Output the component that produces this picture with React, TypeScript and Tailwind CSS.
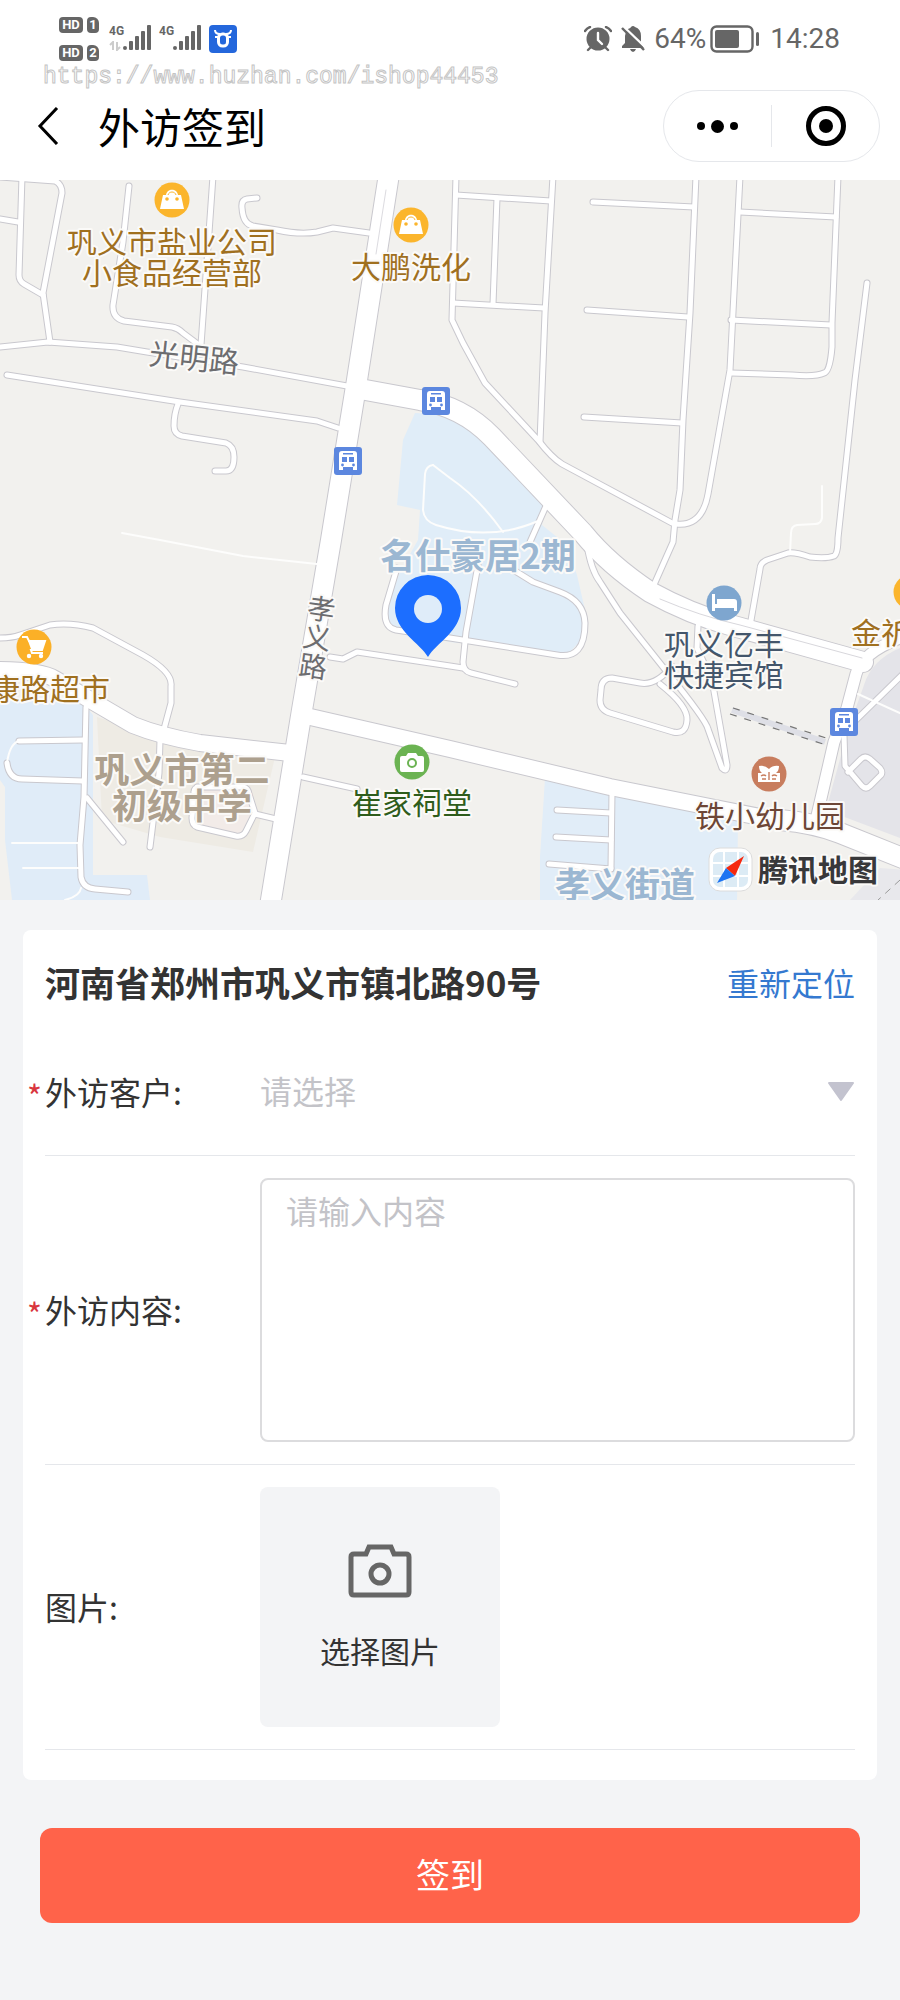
import { useState } from 'react'
import type { ReactNode } from 'react'

type RoadSize = 'lane' | 'street' | 'avenue' | 'main'

interface Road {
  d: string
  size: RoadSize
}

interface MapLabelProps {
  x: number
  y: number
  lines: string[]
  color: string
  size?: number
  weight?: number
  anchor?: 'start' | 'middle' | 'end'
}

interface FieldRowProps {
  id: string
  label: string
  required?: boolean
  className?: string
  children: ReactNode
}

const ROAD_WIDTH: Record<RoadSize, number> = {
  lane: 5,
  street: 11,
  avenue: 16,
  main: 20,
}

const ROADS: Road[] = [
  // north west blocks
  { size: 'lane', d: 'M0 167 L48 162 L117 167 L147 172 L243 187 L347 206' },
  { size: 'lane', d: 'M7 195 L180 222 L317 241 L338 248' },
  { size: 'lane', d: 'M178 224 Q174 234 174 246 Q174 254 182 256 L226 263 Q234 266 234 277 Q234 291 226 291 L215 291' },
  { size: 'lane', d: 'M22 -4 L19 95 Q19 101 24 104 L43 115' },
  { size: 'lane', d: 'M0 39 L18 42' },
  { size: 'lane', d: 'M0 -3 L55 1 Q62 4 62 13 L43 113 L50 162' },
  { size: 'lane', d: 'M129 6 L123 62 L113 125 Q112 138 124 141 L172 147 Q178 148 183 153 L199 165' },
  { size: 'lane', d: 'M213 -4 L208 67 L201 165' },
  { size: 'lane', d: 'M257 18 L247 19 Q241 20 242 28 Q243 44 253 46 L277 50 Q300 55 317 52 L333 48 L369 53' },
  // north east grid
  { size: 'lane', d: 'M456 -4 L452 140 L463 163 L485 203 L538 260 Q552 278 562 284 L672 343' },
  { size: 'lane', d: 'M456 15 L551 21' },
  { size: 'lane', d: 'M497 18 L493 124' },
  { size: 'lane', d: 'M453 123 L544 128' },
  { size: 'lane', d: 'M553 -4 L545 133 L540 262' },
  { size: 'lane', d: 'M593 22 L694 27' },
  { size: 'lane', d: 'M587 130 L688 137' },
  { size: 'lane', d: 'M584 237 L682 243' },
  { size: 'lane', d: 'M696 -4 L690 133 L683 240 L680 310 L675 340 L673 362 L653 407' },
  { size: 'lane', d: 'M740 -4 L730 190 L708 314 Q702 347 676 344' },
  { size: 'lane', d: 'M838 -4 L832 143 L832 167 Q830 192 824 193 Q816 197 792 195 L731 193' },
  { size: 'lane', d: 'M740 32 L836 37' },
  { size: 'lane', d: 'M731 140 L831 145' },
  { size: 'lane', d: 'M867 103 L855 200 L838 358 Q838 374 834 376 Q826 379 810 377 Q795 372 788 373 L767 380 Q760 383 760 389 L750 446' },
  // housing estate
  { size: 'lane', d: 'M546 326 L530 362' },
  { size: 'lane', d: 'M478 385 L466 452 L463 482 Q463 491 471 493 L515 504' },
  { size: 'lane', d: 'M397 388 L386 425 Q382 447 396 450 L450 458 L557 475 Q585 480 585 443 Q584 421 560 412 L533 402 L507 386' },
  { size: 'lane', d: 'M330 477 L343 479 L357 472 L450 486 L463 488' },
  // diagonal lanes in the middle
  { size: 'lane', d: 'M587 365 Q591 390 600 402 L620 433 L667 492 Q706 540 708 549 L722 588 Q727 593 727 585 L712 500 L697 468 L698 446' },
  { size: 'lane', d: 'M672 486 Q656 506 640 503 L612 498 Q601 498 601 510 L600 520 Q600 530 610 533 L673 552 Q686 555 687 540 Q688 526 660 504' },
  // south west
  { size: 'lane', d: 'M0 458 Q12 458 20 455 L50 445 Q70 442 93 448 L143 475 Q173 492 171 506 L171 523 L164 549 L160 560 L159 593 L150 667' },
  { size: 'lane', d: 'M86 527 L84 617 L80 665 L81 697 Q83 708 95 709 L128 712' },
  { size: 'lane', d: 'M87 618 L123 662' },
  { size: 'lane', d: 'M83 560 L19 561' },
  { size: 'lane', d: 'M7 583 Q9 599 22 599 L83 601' },
  { size: 'lane', d: 'M197 607 L243 607 Q248 608 249 614 L255 633 L246 651 Q243 657 236 656 L197 647 Q192 645 192 638 L194 612 Q194 608 199 607' },
  { size: 'lane', d: 'M255 634 L276 639' },
  { size: 'lane', d: 'M303 597 L357 609' },
  // south east
  { size: 'lane', d: 'M612 612 L611 688' },
  { size: 'lane', d: 'M557 630 L611 633' },
  { size: 'lane', d: 'M556 657 L611 660' },
  { size: 'lane', d: 'M549 684 L611 689' },
  { size: 'lane', d: 'M902 495 L856 540' },
  { size: 'lane', d: 'M844 555 L845 586 L862 606 Q866 610 870 606 L881 595 Q883 592 880 588 L870 579 Q865 575 861 579 L848 592' },
  { size: 'street', d: 'M905 456 Q862 472 856 494 L847 528 L834 562 L816 640' },
  { size: 'avenue', d: 'M-4 490 Q40 490 55 499 L92 521 L133 545 Q160 556 200 563 L290 573' },
  { size: 'avenue', d: 'M306 536 L450 569 L610 607 L710 627 L790 643' },
  { size: 'main', d: 'M780 640 Q815 643 840 653 L905 679' },
  { size: 'main', d: 'M360 209 L420 220 Q462 226 492 257 L583 353 Q608 384 650 412 Q690 434 730 445 L863 482' },
  { size: 'main', d: 'M389 -6 L357 200 L331 360 L302 530 L270 726' },
]

// footpaths have no outline
const PATHS = [
  'M122 353 L160 360 L243 376 L317 384',
  'M433 285 Q426 286 425 294 L423 330 Q424 341 436 345 Q490 362 538 341',
  'M433 285 L450 298 Q478 317 503 352',
  'M822 306 L822 338 Q821 344 815 344 L797 345 Q791 346 791 353 L790 373',
  'M20 561 Q10 562 7 583',
  'M12 663 L79 663',
  'M23 688 L79 688',
  'M81 708 Q80 716 65 720',
  'M858 514 L902 534',
]

function MapRoads() {
  return (
    <g fill="none" strokeLinecap="round" strokeLinejoin="round">
      {ROADS.map((road) => (
        <path key={road.d} d={road.d} stroke="#c9c8ce" strokeWidth={ROAD_WIDTH[road.size] + 2} />
      ))}
      {PATHS.map((d) => (
        <path key={d} d={d} stroke="#fdfdfc" strokeWidth="2" />
      ))}
      {ROADS.map((road) => (
        <path key={road.d} d={road.d} stroke="#fff" strokeWidth={ROAD_WIDTH[road.size]} />
      ))}
      <path d="M660 419 Q700 436 740 445 L862 478" stroke="#d8d7dc" strokeWidth="1" />
      <path d="M386 10 L376 74" stroke="#dcdbe0" strokeWidth="1" />
    </g>
  )
}

function MapLabel({ x, y, lines, color, size = 30, weight = 400, anchor = 'middle' }: MapLabelProps) {
  return (
    <text
      textAnchor={anchor}
      fontSize={size}
      fontWeight={weight}
      fill={color}
      stroke="#fbfaf8"
      strokeWidth="4"
      strokeLinejoin="round"
      paintOrder="stroke"
    >
      {lines.map((line, index) => (
        <tspan key={line} x={x} y={y + index * (size + 1)}>
          {line}
        </tspan>
      ))}
    </text>
  )
}

function Poi({ x, y, color, children }: { x: number; y: number; color: string; children?: ReactNode }) {
  return (
    <g transform={`translate(${x} ${y})`}>
      <circle r="17.5" fill={color} />
      {children}
    </g>
  )
}

function ShopBag() {
  return (
    <>
      <path d="M-9 -5 H-6 C-5 -12 5 -12 6 -5 H9 L12 9 H-12 Z" fill="#fff" />
      <path d="M-4 -5 C-3 -9 3 -9 4 -5" fill="none" stroke="#fbb52c" strokeWidth="1" />
      <circle cx="-5" cy="-1" r="1.8" fill="#fbb52c" />
      <circle cx="5" cy="-1" r="1.8" fill="#fbb52c" />
    </>
  )
}

function BusStop({ x, y }: { x: number; y: number }) {
  return (
    <g transform={`translate(${x} ${y})`}>
      <rect x="-14" y="-14" width="28" height="28" rx="3" fill="#5c87df" />
      <path d="M-6 -10 H6 Q9 -10 9 -7 V9 H5 V6 H-5 V9 H-9 V-7 Q-9 -10 -6 -10 Z" fill="#fff" />
      <rect x="-5" y="-8" width="10" height="1.5" fill="#5c87df" />
      <rect x="-6" y="-4" width="5" height="5" fill="#5c87df" />
      <rect x="1" y="-4" width="5" height="5" fill="#5c87df" />
      <circle cx="-5.5" cy="4" r="1.4" fill="#5c87df" />
      <circle cx="5.5" cy="4" r="1.4" fill="#5c87df" />
    </g>
  )
}

function LocationMap() {
  return (
    <svg
      viewBox="0 0 900 720"
      preserveAspectRatio="xMidYMid slice"
      className="block h-[720px] w-full bg-[#f2f1ee]"
      role="img"
      aria-label="地图"
    >
      {/* land use */}
      <path
        d="M415 233 L450 235 L480 250 L517 288 L545 325 L542 345 L567 365 L577 395 L585 430 L583 458 L567 475 L450 462 L388 450 L385 430 L400 392 L418 360 L420 330 L397 325 L403 260 Z"
        fill="#e0edf8"
      />
      <path d="M0 520 L83 523 L93 535 L93 695 L147 695 L150 720 L12 720 L5 660 L5 607 L0 600 Z" fill="#e0ecf8" />
      <path d="M545 598 L612 610 L738 640 L737 720 L540 720 L540 677 Z" fill="#e1edf8" />
      <path d="M97 537 L160 557 L275 577 L253 672 L160 657 L102 640 Z" fill="#eeebe4" />
      <path d="M194 610 L247 608 L254 634 L240 655 L194 645 Z" fill="#f2ebe8" />
      <path d="M905 466 Q872 478 864 505 L848 550 L826 630 L905 660 Z" fill="#e4e4e9" />
      <path d="M905 690 L880 688 L850 720 L905 720 Z" fill="#e8e8ec" />

      <MapRoads />

      {/* railway */}
      <path d="M732 530 L825 562" stroke="#dedfe6" strokeWidth="6" />
      <path d="M733 528 L826 558" stroke="#777" strokeWidth="1.2" strokeDasharray="7 8" />
      <path d="M730 534 L823 564" stroke="#777" strokeWidth="1.2" strokeDasharray="7 8" />
      <path d="M900 700 L878 720" stroke="#999" strokeWidth="1" strokeDasharray="7 6" />

      <BusStop x={436} y={221} />
      <BusStop x={348} y={281} />
      <BusStop x={844} y={542} />

      <Poi x={172} y={20} color="#fbb52c">
        <ShopBag />
      </Poi>
      <Poi x={411} y={45} color="#fbb52c">
        <ShopBag />
      </Poi>
      <Poi x={911} y={412} color="#fbb52c" />
      <Poi x={34} y={467} color="#fbb027">
        <path d="M-12 -10 H-7 L-5 -6 H11 L8 3 H-3 L-2 6 H9" fill="none" stroke="#fff" strokeWidth="2" />
        <path d="M-6 -6 H11 L8 2 H-3 Z" fill="#fff" />
        <circle cx="-5" cy="9" r="2.2" fill="#fff" />
        <circle cx="7" cy="9" r="2.2" fill="#fff" />
      </Poi>
      <Poi x={412} y={582} color="#6bb352">
        <path d="M-10 -6 H-6 L-4 -9 H4 L6 -6 H10 Q12 -6 12 -4 V8 Q12 10 10 10 H-10 Q-12 10 -12 8 V-4 Q-12 -6 -10 -6 Z" fill="#fff" />
        <circle cy="1" r="4" fill="#fff" stroke="#6bb352" strokeWidth="2" />
      </Poi>
      <Poi x={724} y={423} color="#7ea6cf">
        <path d="M-12 -9 H-9 V1 H9 V-3 H-7 V-4 H10 Q13 -4 13 -1 V8 H10 V5 H-9 V8 H-12 Z M-7 -4 H10 V2 H-7 Z" fill="#fff" />
      </Poi>
      <Poi x={769} y={594} color="#c87d5e">
        <path d="M-10 -8 Q-4 -9 0 -5 Q4 -9 10 -8 Q10 -3 7 -1 H11 V8 H-11 V-1 H-7 Q-10 -3 -10 -8 Z" fill="#fff" />
        <path d="M-8 2 Q-5 0 -3 2 M3 2 Q5 0 8 2 M-7 5 H-3 M3 5 H7 M0 -2 V6" stroke="#c87d5e" strokeWidth="1.4" fill="none" />
      </Poi>

      <MapLabel x={172} y={73} lines={['巩义市盐业公司', '小食品经营部']} color="#a0701f" />
      <MapLabel x={411} y={98} lines={['大鹏洗化']} color="#a0701f" />
      <MapLabel x={110} y={520} lines={['康路超市']} color="#a0701f" anchor="end" />
      <MapLabel x={851} y={464} lines={['金祈']} color="#a0701f" anchor="start" />
      <MapLabel x={724} y={475} lines={['巩义亿丰', '快捷宾馆']} color="#44566b" />
      <MapLabel x={412} y={634} lines={['崔家祠堂']} color="#2f5d1c" />
      <MapLabel x={770} y={647} lines={['铁小幼儿园']} color="#6d4636" />
      <MapLabel x={182} y={603} lines={['巩义市第二', '初级中学']} color="#ada08e" size={35} weight={700} />
      <MapLabel x={478} y={389} lines={['名仕豪居2期']} color="#9bb7d2" size={35} weight={700} />
      <MapLabel x={625} y={718} lines={['孝义街道']} color="#9bb7d2" size={35} weight={700} />

      {/* road names follow the road */}
      <g transform="rotate(6 194 180)">
        <MapLabel x={194} y={189} lines={['光明路']} color="#6d6d70" />
      </g>
      <g transform="rotate(8 316 459)">
        <MapLabel x={317} y={439} lines={['孝', '义', '路']} color="#6d6d70" size={28} />
      </g>

      {/* current position */}
      <path d="M428 477 C420 463 395 451 395 428 A33 33 0 0 1 461 428 C461 451 436 463 428 477 Z" fill="#1c6eff" />
      <circle cx="428" cy="429" r="14" fill="#dfecf9" />

      {/* map provider */}
      <rect x="709" y="668" width="43" height="43" rx="11" fill="#fff" stroke="#dcdcdc" strokeWidth="1" />
      <rect x="713" y="672" width="35" height="35" rx="7" fill="#dcebf5" />
      <path d="M724 672 V707 M738 672 V707 M713 683 H748 M713 696 H748" stroke="#fff" strokeWidth="2" />
      <path d="M744 676 L726 688 L735 696 Z" fill="#f5290f" />
      <path d="M717 703 L726 688 L735 696 Z" fill="#1d74f2" />
      <MapLabel x={818} y={701} lines={['腾讯地图']} color="#38383a" size={30} weight={700} />
    </svg>
  )
}

function SimBadge({ slot }: { slot: string }) {
  return (
    <div className="flex gap-1 text-[13px] font-bold leading-4 text-white">
      <span className="w-6 rounded bg-[#666] text-center">HD</span>
      <span className="w-3 rounded-sm rounded-tr-md bg-[#666] text-center">{slot}</span>
    </div>
  )
}

function Signal({ data }: { data?: boolean }) {
  return (
    <div className="flex h-7">
      <div className="w-3.5 text-xs font-bold leading-3 text-[#666]">
        4G
        {data && (
          <svg viewBox="0 0 12 10" className="mt-1 h-2.5 w-3" fill="none" stroke="#ccc" strokeWidth="2" aria-hidden="true">
            <path d="M1 4 L4 1 V9 M8 1 V9 L11 6" />
          </svg>
        )}
      </div>
      <svg viewBox="0 0 28 26" className="h-[26px] w-7" fill="#666" aria-hidden="true">
        <rect x="0" y="21" width="4" height="4" rx="2" />
        <rect x="6" y="16" width="4" height="9" rx="1" />
        <rect x="12" y="11" width="4" height="14" rx="1" />
        <rect x="18" y="6" width="4" height="19" rx="1" />
        <rect x="24" y="0" width="4" height="25" rx="1" />
      </svg>
    </div>
  )
}

function StatusBar() {
  return (
    <div className="flex h-[76px] items-center justify-between pl-[59px] pr-[60px] pt-0.5 font-['Roboto',sans-serif]">
      <div className="flex items-center">
        <div className="mr-2.5 flex flex-col gap-3">
          <SimBadge slot="1" />
          <SimBadge slot="2" />
        </div>
        <div className="flex items-center gap-2">
          <Signal data />
          <Signal />
          <svg viewBox="0 0 28 28" className="size-7" aria-hidden="true">
            <rect width="28" height="28" rx="4" fill="#2467dc" />
            <rect x="9.5" y="9" width="9" height="12" rx="4" fill="none" stroke="#fff" strokeWidth="3" />
            <path d="M6 5 Q6 9 11 9 M22 5 Q22 9 17 9 M6 12 H9 M19 12 H22" fill="none" stroke="#fff" strokeWidth="2" />
          </svg>
        </div>
      </div>

      <div className="flex items-center text-[28px] leading-8 text-[#666]">
        <svg viewBox="0 0 28 26" className="mr-2 h-[26px] w-7" aria-hidden="true">
          <circle cx="14" cy="13" r="11.5" fill="#666" />
          <path d="M14 7 V14 L18 18" fill="none" stroke="#fff" strokeWidth="2.4" strokeLinecap="round" />
          <path d="M1 5 Q3 2 6 1 M27 5 Q25 2 22 1 M4 24 L6 22 M24 24 L22 22" fill="none" stroke="#666" strokeWidth="2.4" strokeLinecap="round" />
        </svg>
        <svg viewBox="0 0 26 26" className="mr-2 size-[26px]" aria-hidden="true">
          <path d="M8 3 Q11 2 11 1 Q13 -1 15 1 Q21 3 21 10 V17 L24 22 H2 V20 L5 17 V10 Q5 6 8 3 Z" fill="#666" />
          <path d="M10 23 H16 Q15 26 13 26 Q11 26 10 23 Z" fill="#666" />
          <path d="M4 1 L26 22" stroke="#fff" strokeWidth="2.4" />
          <path d="M2 2 L24 24" stroke="#666" strokeWidth="2.4" />
        </svg>
        <span className="mr-1">64%</span>
        <svg viewBox="0 0 50 28" className="mr-2.5 h-7 w-[50px]" aria-hidden="true">
          <rect x="1.5" y="1.5" width="41" height="25" rx="5" fill="none" stroke="#666" strokeWidth="2.4" />
          <rect x="5" y="5" width="24" height="18" rx="2" fill="#666" />
          <rect x="46" y="7" width="3" height="14" rx="1.5" fill="#666" />
        </svg>
        <span>14:28</span>
      </div>
    </div>
  )
}

function NavBar() {
  return (
    <div className="flex h-[104px] items-center pb-1 pl-9 pr-5">
      <button type="button" aria-label="返回" className="mr-[38px]">
        <svg viewBox="0 0 24 38" className="h-[38px] w-6" fill="none" stroke="#000" strokeWidth="3" aria-hidden="true">
          <path d="M21 1 L4 19 L21 37" />
        </svg>
      </button>
      <h1 className="text-[42px] leading-[60px] text-black">外访签到</h1>
      <div className="ml-auto flex h-[72px] w-[217px] items-center rounded-full border border-gray-200">
        <button type="button" aria-label="更多" className="flex w-[107px] items-center justify-center gap-1.5">
          <span className="size-2 rounded-full bg-black" />
          <span className="size-[13px] rounded-full bg-black" />
          <span className="size-2 rounded-full bg-black" />
        </button>
        <span className="h-[42px] w-px bg-gray-200" />
        <button type="button" aria-label="关闭" className="flex flex-1 justify-center">
          <span className="flex size-10 items-center justify-center rounded-full border-[5px] border-black">
            <span className="size-3.5 rounded-full bg-black" />
          </span>
        </button>
      </div>
    </div>
  )
}

function FieldRow({ id, label, required, className, children }: FieldRowProps) {
  return (
    <div className={`flex items-center border-b border-gray-200 ${className ?? ''}`}>
      <label htmlFor={id} className="relative w-[215px] shrink-0 pb-0.5 text-[32px] leading-10 text-[#333]">
        {required && <span className="absolute -left-[18px] top-1 text-[#d9363e]">*</span>}
        {label}:
      </label>
      {children}
    </div>
  )
}

export default function App() {
  const [customer, setCustomer] = useState('')
  const [content, setContent] = useState('')

  return (
    <div className="min-h-screen bg-[#f3f4f6] font-['Noto_Sans_CJK_SC',sans-serif]">
      <header className="relative bg-white">
        <StatusBar />
        <p className="absolute left-[43px] top-[63px] font-['Liberation_Mono',monospace] text-[23px] leading-7 text-white [-webkit-text-stroke:1px_#c4c4c4]">
          https://www.huzhan.com/ishop44453
        </p>
        <NavBar />
      </header>

      <LocationMap />

      <form onSubmit={(e) => e.preventDefault()}>
        <div className="mx-[23px] mt-[30px] rounded-lg bg-white px-[22px] pb-[30px]">
          <div className="flex h-[100px] items-center justify-between pt-1">
            <h2 className="text-[35px] font-bold leading-10 text-[#333]">河南省郑州市巩义市镇北路90号</h2>
            <button type="button" className="text-[32px] leading-10 text-[#3579d0]">
              重新定位
            </button>
          </div>

          <FieldRow id="customer" label="外访客户" required className="h-[126px] pb-0.5">
            <div className="relative flex-1">
              <select
                id="customer"
                value={customer}
                onChange={(e) => setCustomer(e.target.value)}
                className="block h-12 w-full appearance-none bg-transparent pb-1 text-[32px] leading-10 text-[#c3c3c8] outline-none"
              >
                <option value="">请选择</option>
              </select>
              <svg viewBox="0 0 28 20" className="pointer-events-none absolute right-0 top-3.5 h-5 w-7" aria-hidden="true">
                <path d="M2 1 H26 L14 18 Z" fill="#c3c3cf" stroke="#c3c3cf" strokeWidth="2" strokeLinejoin="round" />
              </svg>
            </div>
          </FieldRow>

          <FieldRow id="content" label="外访内容" required className="py-[22px]">
            <textarea
              id="content"
              value={content}
              onChange={(e) => setContent(e.target.value)}
              placeholder="请输入内容"
              className="block h-[264px] flex-1 resize-none rounded-lg border-2 border-[#dcdcde] px-6 py-2.5 text-[32px] leading-10 text-[#333] outline-none placeholder:text-[#c3c3c8]"
            />
          </FieldRow>

          <FieldRow id="photo" label="图片" className="py-[22px]">
            <label
              htmlFor="photo"
              className="flex size-60 cursor-pointer flex-col items-center justify-center gap-8 rounded-lg bg-[#f3f4f6]"
            >
              <svg viewBox="0 0 64 54" className="h-[54px] w-16" fill="none" stroke="#666" strokeWidth="5" aria-hidden="true">
                <path d="M6 10 H18 L21 3 H43 L46 10 H58 Q61 10 61 13 V48 Q61 51 58 51 H6 Q3 51 3 48 V13 Q3 10 6 10 Z" />
                <circle cx="32" cy="30" r="9" />
              </svg>
              <span className="text-[30px] leading-10 text-[#333]">选择图片</span>
              <input id="photo" type="file" accept="image/*" className="sr-only" />
            </label>
          </FieldRow>
        </div>

        <div className="px-10 pt-12">
          <button type="submit" className="h-[95px] w-full rounded-xl bg-[#ff634a] pb-1 text-[34px] leading-10 text-white">
            签到
          </button>
        </div>
      </form>
    </div>
  )
}
